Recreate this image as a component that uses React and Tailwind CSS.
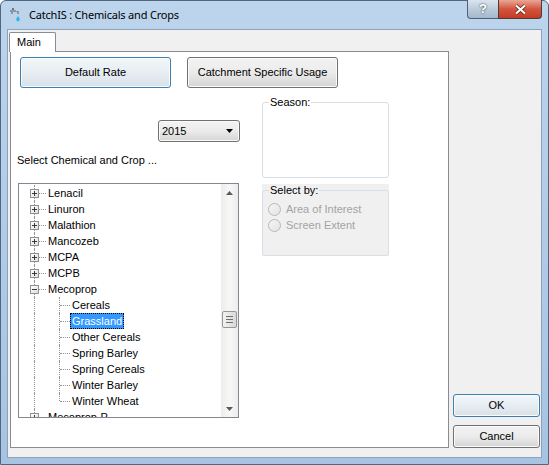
import React from 'react';

const ui = "font-['Liberation_Sans',Arial,sans-serif] text-[11px] text-black";
const dot = 'border-dotted border-[#939393]';

const before = ['Lenacil', 'Linuron', 'Malathion', 'Mancozeb', 'MCPA', 'MCPB'];
const crops = ['Cereals', 'Grassland', 'Other Cereals', 'Spring Barley', 'Spring Cereals', 'Winter Barley', 'Winter Wheat'];

function Expander({ open }) {
  return (
    <span className="flex h-[9px] w-[9px] shrink-0 items-center justify-center border border-[#919191] bg-gradient-to-br from-white to-[#dedede]">
      <svg width="7" height="7" viewBox="0 0 7 7">
        <path d="M1 3.5h5" stroke="#3a3a3a" />
        {!open && <path d="M3.5 1v5" stroke="#3a3a3a" />}
      </svg>
    </span>
  );
}

function RootRow({ name, open }) {
  return (
    <div className="flex h-[16px] shrink-0 items-center">
      <div className="ml-[11px] flex h-full w-[9px] flex-col items-center">
        <span className={`flex-1 border-l ${dot}`} />
        <Expander open={open} />
        <span className={`flex-1 border-l ${dot}`} />
      </div>
      <span className={`w-[7px] border-t ${dot}`} />
      <span className="h-full px-[2px] leading-[16px]">{name}</span>
    </div>
  );
}

function ChildRow({ name, last, selected }) {
  return (
    <div className="flex h-[16px] shrink-0 items-center">
      <div className="ml-[11px] flex h-full w-[9px] justify-center">
        <span className={`border-l ${dot}`} />
      </div>
      <div className="ml-[20px] flex h-full w-[11px]">
        <span className={`border-l ${dot} ${last ? 'h-[8px]' : 'h-full'}`} />
        <span className={`flex-1 self-center border-t ${dot}`} />
      </div>
      <span
        className={`h-full px-[2px] leading-[16px] ${
          selected ? 'bg-[#3399ff] text-white outline-1 outline-dotted outline-black -outline-offset-1' : ''
        }`}
      >
        {name}
      </span>
    </div>
  );
}

function Arrow({ up }) {
  return (
    <svg width="7" height="4" viewBox="0 0 7 4">
      <path d={up ? 'M0 4L3.5 0L7 4Z' : 'M0 0L3.5 4L7 0Z'} fill="#5a5a5a" />
    </svg>
  );
}

function Scrollbar() {
  return (
    <div className="flex w-[17px] shrink-0 flex-col bg-gradient-to-r from-[#ececec] via-[#f7f7f7] to-[#ececec]">
      <div className="flex h-[17px] items-center justify-center">
        <Arrow up />
      </div>
      <div className="h-[110px]" />
      <div className="mx-[1px] flex h-[17px] flex-col items-center justify-center gap-[2px] rounded-[2px] border border-[#979797] bg-gradient-to-r from-[#f2f2f2] to-[#d9d9d9]">
        <span className="h-px w-[7px] bg-[#6f6f6f]" />
        <span className="h-px w-[7px] bg-[#6f6f6f]" />
        <span className="h-px w-[7px] bg-[#6f6f6f]" />
      </div>
      <div className="flex-1" />
      <div className="flex h-[17px] items-center justify-center">
        <Arrow />
      </div>
    </div>
  );
}

function WinButton({ children, primary, className = '' }) {
  return (
    <div
      className={`flex items-center justify-center rounded-[3px] border shadow-[inset_0_0_0_1px_#fbfbfb] ${
        primary
          ? 'border-[#3c7fb1] bg-gradient-to-b from-[#f2f6f9] via-[#e7edf2] to-[#d8e1e9]'
          : 'border-[#707070] bg-gradient-to-b from-[#f3f3f3] via-[#ebebeb] to-[#d5d5d5]'
      } ${className}`}
    >
      {children}
    </div>
  );
}

function Radio({ label }) {
  return (
    <div className="flex h-[16px] items-center">
      <span className="h-[13px] w-[13px] rounded-full border border-[#b8b8b8] bg-gradient-to-br from-[#f6f6f6] to-[#e3e3e3]" />
      <span className="ml-[5px] text-[#a3a3a3]">{label}</span>
    </div>
  );
}

function TitleIcon() {
  return (
    <svg width="12" height="16" viewBox="0 0 12 16">
      <path d="M1 3h6v2H4v2H2V5H1z" fill="#8a96a3" />
      <path d="M3 1h2v2H3z" fill="#6d7885" />
      <path d="M7 4h3v3H8V5H7z" fill="#8a96a3" />
      <path d="M9 9c1 1.6 1.8 2.6 1.8 3.6A1.8 1.8 0 0 1 7.2 12.6C7.2 11.6 8 10.6 9 9z" fill="#2fb6e8" />
    </svg>
  );
}

export default function App() {
  return (
    <div className={`h-[465px] w-[549px] bg-white ${ui}`}>
      <div className="flex h-full flex-col rounded-t-[6px] border border-[#51677f] bg-gradient-to-b from-[#bcd4ec] via-[#b1cbe7] to-[#a6c4e2] px-[6px] pb-[6px]">
        {/* title bar */}
        <div className="flex h-[28px] shrink-0">
          <div className="ml-[2px] flex items-center gap-[8px] self-center">
            <TitleIcon />
            <span className="font-['Noto_Sans',sans-serif] text-[11px] tracking-[-0.2px] text-black">
              CatchIS : Chemicals and Crops
            </span>
          </div>
          <div className="flex-1" />
          <div className="-mt-px flex h-[19px] self-start">
            <div className="flex w-[31px] items-center justify-center rounded-bl-[4px] border border-r-0 border-t-0 border-[#4f6073] bg-gradient-to-b from-[#dbe5ef] via-[#bccbdb] to-[#a4b8cd] text-[13px] font-bold text-white [text-shadow:0_0_2px_#1c2a3a]">
              ?
            </div>
            <div className="flex w-[44px] items-center justify-center rounded-br-[4px] border border-t-0 border-[#4f3a36] bg-gradient-to-b from-[#e8a797] via-[#d2543f] to-[#c53b22]">
              <svg width="13" height="11" viewBox="0 0 13 11">
                <path d="M2 1.5l9 8M11 1.5l-9 8" stroke="#5a1e14" strokeWidth="3.6" />
                <path d="M2 1.5l9 8M11 1.5l-9 8" stroke="#ffffff" strokeWidth="2.2" />
              </svg>
            </div>
          </div>
        </div>

        {/* client area */}
        <div className="flex flex-1 border border-[#8ba2ba] bg-[#f0f0f0]">
          <div className="flex flex-col pl-[2px] pt-[2px]">
            <div className="relative z-10 -mb-px -ml-px flex h-[20px] w-[47px] items-center rounded-t-[2px] border border-b-0 border-[#898c95] bg-white pl-[7px]">
              Main
            </div>
            <div className="flex h-[397px] w-[439px] flex-col border border-[#898c95] bg-white">
              <div className="ml-[9px] mt-[5px] flex gap-[16px]">
                <WinButton primary className="h-[31px] w-[151px]">Default Rate</WinButton>
                <WinButton className="h-[31px] w-[151px]">Catchment Specific Usage</WinButton>
              </div>
              <div className="ml-[6px] flex">
                {/* left column */}
                <div className="flex w-[223px] flex-col">
                  <WinButton className="mt-[32px] h-[22px] w-[82px] self-end !justify-between pl-[3px] pr-[6px]">
                    <span>2015</span>
                    <svg width="7" height="4" viewBox="0 0 7 4">
                      <path d="M0 0L3.5 4L7 0Z" fill="#000" />
                    </svg>
                  </WinButton>
                  <div className="mt-[12px] h-[13px] leading-[13px]">Select Chemical and Crop ...</div>
                  <div className="ml-px mt-[16px] flex h-[235px] w-[221px] border border-[#828790] bg-white">
                    <div className="flex flex-1 flex-col overflow-hidden pt-px">
                      {before.map((n) => (
                        <RootRow key={n} name={n} />
                      ))}
                      <RootRow name="Mecoprop" open />
                      {crops.map((c, i) => (
                        <ChildRow key={c} name={c} selected={c === 'Grassland'} last={i === crops.length - 1} />
                      ))}
                      <RootRow name="Mecoprop-P" />
                    </div>
                    <Scrollbar />
                  </div>
                </div>

                {/* right column */}
                <div className="ml-[22px] flex w-[127px] flex-col">
                  <fieldset className="mt-[8px] h-[82px] rounded-[3px] border border-[#d5dfe5] bg-white">
                    <legend className="ml-[6px] px-px leading-[13px]">Season:</legend>
                  </fieldset>
                  <div className="mt-[6px] h-[72px] bg-[#f0f0f0]">
                    <fieldset className="h-full rounded-[3px] border border-[#d5dfe5] pl-[5px] pt-[4px]">
                      <legend className="ml-px px-px leading-[13px]">Select by:</legend>
                      <Radio label="Area of Interest" />
                      <Radio label="Screen Extent" />
                    </fieldset>
                  </div>
                </div>
              </div>
            </div>
          </div>

          <div className="flex flex-1 flex-col justify-end pb-[9px] pl-[4px]">
            <WinButton primary className="h-[23px] w-[87px]">OK</WinButton>
            <WinButton className="mt-[8px] h-[23px] w-[87px]">Cancel</WinButton>
          </div>
        </div>
      </div>
    </div>
  );
}
